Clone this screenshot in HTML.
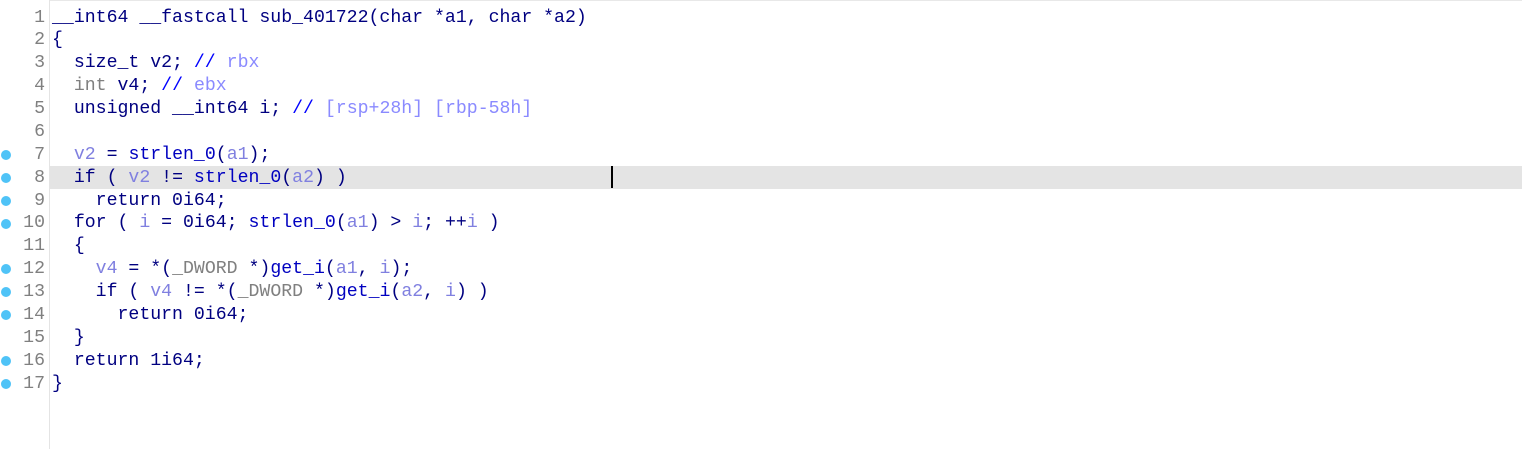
<!DOCTYPE html>
<html><head><meta charset="utf-8"><style>
html,body{margin:0;padding:0;background:#fff;width:1522px;height:449px;overflow:hidden;}
body{position:relative;font-family:"Liberation Mono",monospace;font-size:18.2px;}
.gut{position:absolute;left:49px;top:0;width:1px;height:449px;background:#e4e4e4;}
.topl{position:absolute;left:50px;top:0;width:1472px;height:1px;background:#e8e8e8;}
.hl{position:absolute;left:50px;top:166px;width:1472px;height:23px;background:#e4e4e4;}
.cur{position:absolute;left:611px;top:166px;width:2px;height:22px;background:#000;}
.ln{position:absolute;left:0;width:45px;text-align:right;color:#808080;height:22.875px;line-height:22.875px;}
.dot{position:absolute;left:1px;width:10px;height:10px;border-radius:50%;background:#4fc3f7;}
.code{position:absolute;left:52px;top:6.5px;margin:0;white-space:pre;font-family:"Liberation Mono",monospace;font-size:18.2px;line-height:22.875px;color:#000080;}
.g{color:#808080}.v{color:#8080e0}.c{color:#0000ff}.ct{color:#8a8aff}.f{color:#0000c0}
</style></head><body>
<div class="topl"></div>
<div class="hl"></div>
<div class="gut"></div>
<pre class="code">__int64 __fastcall sub_401722(char *a1, char *a2)
{
  size_t v2; <span class="c">//</span> <span class="ct">rbx</span>
  <span class="g">int</span> v4; <span class="c">//</span> <span class="ct">ebx</span>
  unsigned __int64 i; <span class="c">//</span> <span class="ct">[rsp+28h] [rbp-58h]</span>

  <span class="v">v2</span> = <span class="f">strlen_0</span>(<span class="v">a1</span>);
  if ( <span class="v">v2</span> != <span class="f">strlen_0</span>(<span class="v">a2</span>) )
    return 0i64;
  for ( <span class="v">i</span> = 0i64; <span class="f">strlen_0</span>(<span class="v">a1</span>) &gt; <span class="v">i</span>; ++<span class="v">i</span> )
  {
    <span class="v">v4</span> = *(<span class="g">_DWORD</span> *)<span class="f">get_i</span>(<span class="v">a1</span>, <span class="v">i</span>);
    if ( <span class="v">v4</span> != *(<span class="g">_DWORD</span> *)<span class="f">get_i</span>(<span class="v">a2</span>, <span class="v">i</span>) )
      return 0i64;
  }
  return 1i64;
}</pre>
<div class="cur"></div>
<div class="ln" style="top:6.5px">1</div>
<div class="ln" style="top:29.4px">2</div>
<div class="ln" style="top:52.3px">3</div>
<div class="ln" style="top:75.1px">4</div>
<div class="ln" style="top:98px">5</div>
<div class="ln" style="top:120.9px">6</div>
<div class="ln" style="top:143.8px">7</div>
<div class="ln" style="top:166.6px">8</div>
<div class="ln" style="top:189.5px">9</div>
<div class="ln" style="top:212.4px">10</div>
<div class="ln" style="top:235.3px">11</div>
<div class="ln" style="top:258.1px">12</div>
<div class="ln" style="top:281px">13</div>
<div class="ln" style="top:303.9px">14</div>
<div class="ln" style="top:326.8px">15</div>
<div class="ln" style="top:349.6px">16</div>
<div class="ln" style="top:372.5px">17</div>
<div class="dot" style="top:150px"></div>
<div class="dot" style="top:173px"></div>
<div class="dot" style="top:196px"></div>
<div class="dot" style="top:219px"></div>
<div class="dot" style="top:264px"></div>
<div class="dot" style="top:287px"></div>
<div class="dot" style="top:310px"></div>
<div class="dot" style="top:356px"></div>
<div class="dot" style="top:379px"></div>
</body></html>
